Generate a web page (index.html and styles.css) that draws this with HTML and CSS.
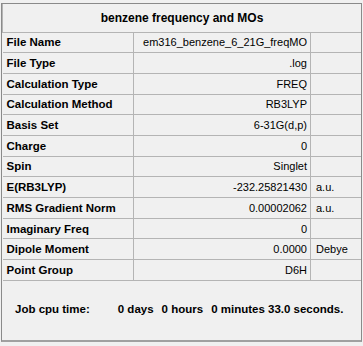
FILE: index.html
```html
<!DOCTYPE html>
<html lang="en">
<head>
    <meta charset="UTF-8">
    <title>benzene frequency and MOs</title>
    <link rel="stylesheet" href="styles.css">
</head>
<body>
    <div class="panel">
        <table class="summary">
            <colgroup>
                <col class="col-label">
                <col class="col-value">
                <col class="col-unit">
            </colgroup>
            <tr class="title-row">
                <th colspan="3">benzene frequency and MOs</th>
            </tr>
            <tr><td class="label">File Name</td><td class="value">em316_benzene_6_21G_freqMO</td><td class="unit"></td></tr>
            <tr><td class="label">File Type</td><td class="value">.log</td><td class="unit"></td></tr>
            <tr><td class="label">Calculation Type</td><td class="value">FREQ</td><td class="unit"></td></tr>
            <tr><td class="label">Calculation Method</td><td class="value">RB3LYP</td><td class="unit"></td></tr>
            <tr><td class="label">Basis Set</td><td class="value">6-31G(d,p)</td><td class="unit"></td></tr>
            <tr><td class="label">Charge</td><td class="value">0</td><td class="unit"></td></tr>
            <tr><td class="label">Spin</td><td class="value">Singlet</td><td class="unit"></td></tr>
            <tr><td class="label">E(RB3LYP)</td><td class="value">-232.25821430</td><td class="unit">a.u.</td></tr>
            <tr><td class="label">RMS Gradient Norm</td><td class="value">0.00002062</td><td class="unit">a.u.</td></tr>
            <tr><td class="label">Imaginary Freq</td><td class="value">0</td><td class="unit"></td></tr>
            <tr><td class="label">Dipole Moment</td><td class="value">0.0000</td><td class="unit">Debye</td></tr>
            <tr><td class="label">Point Group</td><td class="value">D6H</td><td class="unit"></td></tr>
        </table>
        <div class="cpu-time">
            <span class="cpu-label">Job cpu time:</span>
            <span>0 days</span>
            <span>0 hours</span>
            <span>0 minutes 33.0 seconds.</span>
        </div>
    </div>
</body>
</html>
```
FILE: styles.css
```css
* {
    margin: 0;
    padding: 0;
    box-sizing: border-box;
    font-family: 'Liberation Sans', Arial, sans-serif;
}

body {
    background: #f0f0f0;
    color: #000000;
    font-size: 11px;
}

.panel {
    margin: 3px 0 0 1px;
    width: 361px;
    height: 339px;
    border: 1px solid #8a8a8a;
    border-bottom: 2px solid #a0a0a0;
    background: #f0f0f0;
}

.summary {
    width: 359px;
    border-collapse: collapse;
    table-layout: fixed;
}

.col-label {
    width: 131px;
}

.col-value {
    width: 177px;
}

.summary th,
.summary td {
    border: 1px solid #b4b4b4;
    white-space: nowrap;
    overflow: hidden;
}

.summary tr:first-child th {
    border-top: none;
}

.summary td:first-child {
    border-left: none;
}

.summary td:last-child,
.summary th {
    border-right: none;
}

.title-row th {
    height: 28px;
    font-size: 12px;
    font-weight: bold;
    text-align: center;
}

.summary tr td {
    height: 20.7px;
}

.label {
    padding-left: 4px;
    font-size: 11.5px;
    font-weight: bold;
}

.value {
    padding-right: 3px;
    text-align: right;
}

.unit {
    padding-left: 5px;
}

.cpu-time {
    display: flex;
    align-items: center;
    height: 56px;
    padding-left: 13px;
    font-size: 11.5px;
    font-weight: bold;
    gap: 8px;
}

.cpu-label {
    margin-right: 20px;
}
```
